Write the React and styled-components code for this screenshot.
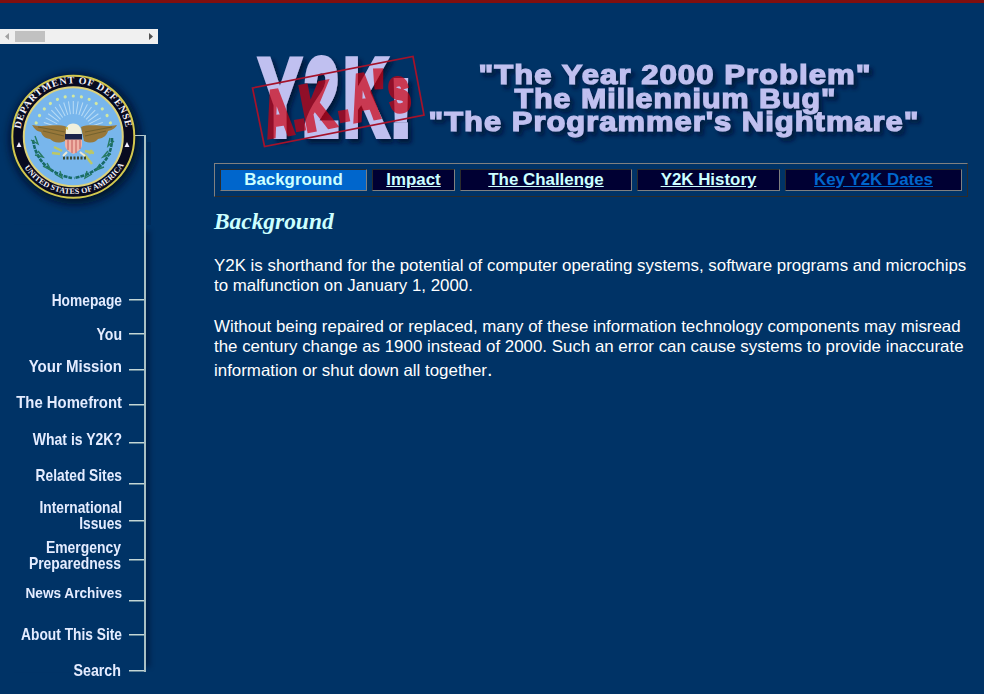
import React from "react";
import styled, { createGlobalStyle } from "styled-components";

const GlobalStyle = createGlobalStyle`
  html, body { margin: 0; padding: 0; background: #003366; }
  body { height: 694px; overflow: hidden; font-family: "Liberation Sans", Arial, sans-serif; color: #fff; }
`;

const Page = styled.div`
  height: 694px;
  box-sizing: border-box;
  border-top: 3px solid #800f0f;
  display: grid;
  grid-template-columns: 158px 1fr;
  overflow: hidden;
`;

const Sidebar = styled.aside`
  padding-top: 26px;
`;

const ScrollBar = styled.div`
  height: 15px;
  background: #f0f0f0;
  display: flex;
  align-items: center;
  box-sizing: border-box;
  padding: 0 5px;
  justify-content: space-between;
`;

const Thumb = styled.div`
  width: 30px;
  height: 11px;
  margin-left: 6px;
  margin-right: auto;
  background: #c1c1c1;
`;

const Arrow = styled.svg`
  display: block;
  width: 4px;
  height: 7px;
  fill: ${(p) => p.$color};
`;

const SealArt = styled.svg`
  display: block;
`;

const Menu = styled.nav`
  width: 146px;
  box-sizing: border-box;
  border-right: 2px solid #a9bfc4;
  box-shadow: 9px 0 5px -5px rgba(0, 10, 40, 0.45);
`;

const MenuRow = styled.a`
  display: grid;
  grid-template-columns: 122px 15px;
  justify-content: space-between;
  align-items: end;
  height: ${(p) => p.$height}px;
  color: #e4ecff;
  text-decoration: none;
`;

const MenuLabel = styled.span`
  display: block;
  margin-bottom: ${(p) => p.$drop}px;
  margin-right: ${(p) => p.$inset || 0}px;
  font-size: ${(p) => p.$size || 16.2}px;
  font-weight: bold;
  line-height: 16px;
  text-align: right;
  white-space: pre;
  transform: scaleX(${(p) => p.$squeeze || 0.85});
  transform-origin: right;
`;

const Tick = styled.span`
  height: 1px;
  border-bottom: 1px solid #5f8398;
  background: #c3d6d6;
`;

const Main = styled.main`
  padding: 42px 16px 0 56px;
`;

const Banner = styled.svg`
  display: block;
  margin-left: 26px;
`;

const Tabs = styled.div`
  margin-top: 8px;
  width: 754px;
  height: 34px;
  box-sizing: border-box;
  border: 1px solid;
  border-color: #808080 #2c2c2c #2c2c2c #808080;
  padding: 5px;
  display: grid;
  grid-template-columns: 147px 83px 172px 143px 177px;
  column-gap: 5px;
  align-items: start;
`;

const Tab = styled.a`
  height: 22px;
  box-sizing: border-box;
  border: 1px solid;
  border-color: #2c2c2c #808080 #808080 #2c2c2c;
  background: ${(p) => (p.$active ? "#0066cc" : "#000033")};
  color: ${(p) => p.$color || "#ccffff"};
  font-size: 16.9px;
  font-weight: bold;
  line-height: 20px;
  text-align: center;
  text-decoration: ${(p) => (p.$active ? "none" : "underline")};
`;

const Heading = styled.h2`
  margin: 10px 0 0;
  font: italic bold 23.4px/28px "Liberation Serif", "Times New Roman", serif;
  color: #ccffff;
`;

const Copy = styled.p`
  margin: ${(p) => p.$gap}px 0 0;
  font-size: 16.89px;
  line-height: 20px;
  white-space: nowrap;
`;

const LastLine = styled.span`
  display: block;
  line-height: 24px;
`;

const Stop = styled.span`
  font-size: 20px;
`;

const items = [
  { label: "Homepage", height: 76, drop: -7 },
  { label: "You", height: 34, drop: -7, squeeze: 0.87 },
  { label: "Your Mission", height: 36, drop: -4, size: 17, squeeze: 0.885 },
  { label: "The Homefront", height: 35, drop: -5, size: 17, squeeze: 0.875 },
  { label: "What is Y2K?", height: 38, drop: -3, squeeze: 0.865 },
  { label: "Related Sites", height: 41, drop: 2 },
  { label: "International\nIssues", height: 37, drop: -9 },
  { label: "Emergency\nPreparedness", height: 39, drop: -10, inset: 1, squeeze: 0.86 },
  { label: "News Archives", height: 41, drop: 1, size: 15.5, squeeze: 0.88 },
  { label: "About This Site", height: 34, drop: -6 },
  { label: "Search", height: 36, drop: -6, inset: 1, squeeze: 0.88 },
];

const tabs = [
  { label: "Background", active: true },
  { label: "Impact" },
  { label: "The Challenge" },
  { label: "Y2K History" },
  { label: "Key Y2K Dates", color: "#0066cc" },
];

const rays = Array.from({ length: 19 }, (_, i) => -81 + i * 9);
const stars = Array.from({ length: 13 }, (_, i) => -72 + i * 12);

function Seal() {
  return (
    <SealArt width="158" height="181" viewBox="0 44 158 181">
      <defs>
        <filter id="blur" x="-20%" y="-20%" width="140%" height="140%">
          <feGaussianBlur stdDeviation="4" />
        </filter>
        <path id="topArc" d="M20.5 144 A53.3 53.3 0 1 1 126.1 144" />
        <path id="bottomArc" d="M17.5 153 A58.5 58.5 0 0 0 129.1 153" />
      </defs>
      <circle cx="75" cy="139" r="65" fill="#001022" opacity="0.85" filter="url(#blur)" />
      <path d="M149 142V225" stroke="#001a40" strokeWidth="4" opacity=".3" />
      <path d="M135 135.5H144.500" fill="none" stroke="#b4c8cc" strokeWidth="1" />
      <path d="M145 135V225" fill="none" stroke="#a9bfc4" strokeWidth="2" />
      <circle cx="73.3" cy="136.7" r="61" fill="#080a20" stroke="#d2c84e" strokeWidth="2" />
      <circle cx="73.3" cy="136.7" r="49.5" fill="#78b6ec" stroke="#ddd27a" strokeWidth="2" />
      <g fill="#f4f2fa" fontFamily="Liberation Serif, serif" fontWeight="bold">
        <text fontSize="10"><textPath href="#topArc" startOffset="15" textLength="150">DEPARTMENT OF DEFENSE</textPath></text>
        <text fontSize="8"><textPath href="#bottomArc" startOffset="16" textLength="119">UNITED STATES OF AMERICA</textPath></text>
      </g>
      <path d="M19 142l2.5 5h-5zM127 142l2.5 5h-5z" fill="#f2efff" />
      <g stroke="#b9dcf5" strokeWidth="1">
        {rays.map((a) => (
          <path key={a} d="M73.3 114V101" transform={`rotate(${a} 73.3 132)`} />
        ))}
      </g>
      <g fill="#d3e8a0">
        {stars.map((a) => (
          <circle key={a} cx="73.3" cy="96" r="1.6" transform={`rotate(${a} 73.3 135)`} />
        ))}
      </g>
      <g fill="none" stroke="#176a66" strokeWidth="2.6" strokeDasharray="4 1">
        <path d="M33 140C36 161 50 174 72 178" />
        <path d="M112 138C112 160 97 174 74 178" />
      </g>
      <g fill="none" stroke="#277a62" strokeWidth="1.4">
        <path d="M35 136l3 8-7-4M38 151l5 6-8-2M47 163l4 7-8-4M60 171l2 7-7-4M110 138l-2 8 6-5M108 151l-5 6 8-3M100 164l-4 6 8-3M87 171l-2 7 7-4" />
      </g>
      <path d="M32 125C44 128 56 123 67 127L65 141C58 144 53 142 50 139C44 138 42 135 41 132C36 131 34 128 32 125Z" fill="#98783a" />
      <path d="M117 125C103 128 92 123 81 127L84 141C91 144 96 142 98 139C104 138 107 135 108 131C113 130 116 127 117 125Z" fill="#98783a" />
      <path d="M38 127L65 132M43 131L64 136M112 127L85 132M106 131L85 136" stroke="#75632f" strokeWidth="1.2" />
      <path d="M66 135C65 127 68 123.500 73 123.500C79 123.500 82 128 82 136Z" fill="#f1f0dc" />
      <path d="M68 127l-3 1 3 2z" fill="#d8c34b" />
      <path d="M65 135H82V145C82 149 77 152 73.5 154C69 152 65 149 65 145Z" fill="#f0b3a6" />
      <path d="M68 140V150M72 140V153M76 140V153M80 140V149" stroke="#cf7471" strokeWidth="1.4" />
      <path d="M65 134H82V139.500H65Z" fill="#1b2449" />
      <path d="M62 151L54 147M60 154L52 153M85 151L94 153M84 154L92 164M89 154L92 150" stroke="#bcc766" strokeWidth="2.5" />
      <path d="M63 158H86" stroke="#3c4930" strokeWidth="3" strokeDasharray="2 1.5" />
      <path d="M67 152l-4 4M80 152l5 4" stroke="#efe8cf" strokeWidth="2" />
    </SealArt>
  );
}

function Logo() {
  return (
    <Banner width="700" height="110" viewBox="240 45 700 110">
      <defs>
        <filter id="drop" x="-5%" y="-10%" width="112%" height="130%">
          <feDropShadow dx="3.500" dy="4" stdDeviation="2" floodColor="#000d30" floodOpacity="0.8" />
        </filter>
      </defs>
      <g filter="url(#drop)" fill="#c0c0f0" stroke="#c0c0f0" fontFamily="Liberation Sans, sans-serif" fontWeight="bold">
        <g fontSize="111" strokeWidth="6">
          <text transform="translate(258.500 135.500) scale(.58 1)">Y</text>
          <text transform="translate(304 135.500) scale(.57 1)">2</text>
          <text transform="translate(343 135.500) scale(.565 1)">K</text>
          <text transform="translate(390 135.500) scale(.82 1)" fontSize="80">!</text>
        </g>
      </g>
      <g filter="url(#drop)" fill="#c0c0f0" stroke="#c0c0f0" strokeWidth="1.2" fontFamily="Liberation Sans, sans-serif" fontWeight="bold" fontSize="27" letterSpacing="0.9">
        <text x="478.500" y="84" textLength="393" lengthAdjust="spacingAndGlyphs">"The Year 2000 Problem"</text>
        <text x="514.500" y="107.500" textLength="322" lengthAdjust="spacingAndGlyphs">The Millennium Bug"</text>
        <text x="428.500" y="131" textLength="491" lengthAdjust="spacingAndGlyphs">"The Programmer's Nightmare"</text>
      </g>
      <path d="M252.500 88L413 56.500L424 115L264.500 146.500Z" fill="none" stroke="#a5122a" strokeWidth="1.7" />
      <g opacity=".7" fill="#cd0010" stroke="#cd0010" strokeWidth="5" fontFamily="Liberation Sans, sans-serif" fontWeight="bold" fontSize="64">
        <text transform="translate(268 137) rotate(-9) scale(.58 1)">A</text>
        <text transform="translate(295 130) rotate(-11) scale(.85 1)" fontSize="50">.</text>
        <text transform="translate(306 131) rotate(-11) scale(.66 1)">K</text>
        <text transform="translate(339 121) rotate(-11) scale(.85 1)" fontSize="50">.</text>
        <text transform="translate(354 121) rotate(-9) scale(.58 1)">A</text>
        <text transform="translate(374 115) rotate(-2) scale(.75 1)">'</text>
        <text transform="translate(391 112) rotate(-8) scale(.64 1)" fontSize="60">s</text>
      </g>
    </Banner>
  );
}

export default function App() {
  return (
    <>
      <GlobalStyle />
      <Page>
        <Sidebar>
          <ScrollBar>
            <Arrow viewBox="0 0 4 7" $color="#a3a3a3"><path d="M4 0V7L0 3.500Z" /></Arrow>
            <Thumb />
            <Arrow viewBox="0 0 4 7" $color="#505050"><path d="M0 0V7L4 3.500Z" /></Arrow>
          </ScrollBar>
          <Seal />
          <Menu>
            {items.map((it) => (
              <MenuRow key={it.label} $height={it.height}>
                <MenuLabel $drop={it.drop} $size={it.size} $squeeze={it.squeeze} $inset={it.inset}>{it.label}</MenuLabel>
                <Tick />
              </MenuRow>
            ))}
          </Menu>
        </Sidebar>
        <Main>
          <Logo />
          <Tabs>
            {tabs.map((t) => (
              <Tab key={t.label} $active={t.active} $color={t.color}>{t.label}</Tab>
            ))}
          </Tabs>
          <Heading>Background</Heading>
          <Copy $gap={21}>
            Y2K is shorthand for the potential of computer operating systems, software programs and microchips
            <br />
            to malfunction on January 1, 2000.
          </Copy>
          <Copy $gap={21}>
            Without being repaired or replaced, many of these information technology components may misread
            <br />
            the century change as 1900 instead of 2000. Such an error can cause systems to provide inaccurate
            <LastLine>information or shut down all together<Stop>.</Stop></LastLine>
          </Copy>
        </Main>
      </Page>
    </>
  );
}
